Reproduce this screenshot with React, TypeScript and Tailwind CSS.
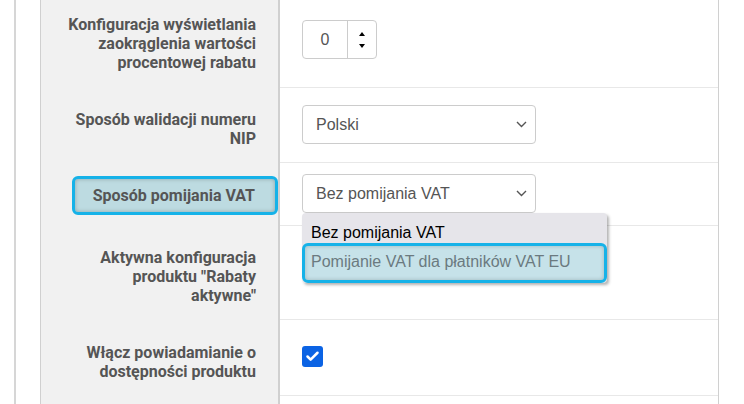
import { Check } from "lucide-react";

const labelFont = "font-['Roboto',sans-serif] font-bold text-[16px] leading-[19px] text-[#555555]";
const inputFont = "font-['Liberation_Sans',Arial,sans-serif] text-[16px]";

const Chevron = () => (
  <svg width="11" height="7" viewBox="0 0 11 7" className="shrink-0">
    <path d="M1 1l4.5 4.5L10 1" fill="none" stroke="#555" strokeWidth="1.4" />
  </svg>
);

const Select = ({ value }: { value: string }) => (
  <div className={`flex h-[39px] w-[234px] items-center justify-between rounded-[4px] border border-[#cccccc] bg-white pl-[13px] pr-[8px] text-[#555555] ${inputFont}`}>
    <span>{value}</span>
    <Chevron />
  </div>
);

const App = () => {
  return (
    <div className="flex h-[404px] w-[744px] overflow-hidden bg-white">
      <div className="ml-[14px] w-[2px] bg-[#d6d6d6]" />
      <div className="-mt-[7px] ml-[24px] w-[679px] border-l border-r border-[#d0d0d0]">
        {/* wiersz 1 */}
        <div className="grid h-[95px] grid-cols-[239px_1fr]">
          <div className={`border-r-2 border-[#d0d0d0] bg-[#f1f1f1] pr-[22px] pt-[22px] text-right ${labelFont}`}>
            Konfiguracja wyświetlania
            <br />
            zaokrąglenia wartości
            <br />
            procentowej rabatu
          </div>
          <div className="border-b border-[#e8e8e8] pl-[22px] pt-[27px]">
            <div className={`flex h-[39px] w-[75px] rounded-[4px] border border-[#cccccc] ${inputFont}`}>
              <div className="flex w-[44px] items-center justify-center text-[#555555]">0</div>
              <div className="flex flex-1 flex-col items-center justify-center gap-[8px] border-l border-[#cccccc]">
                <span className="h-0 w-0 border-x-[3px] border-b-[4px] border-x-transparent border-b-black" />
                <span className="h-0 w-0 border-x-[3px] border-t-[4px] border-x-transparent border-t-black" />
              </div>
            </div>
          </div>
        </div>

        {/* wiersz 2 */}
        <div className="grid h-[75px] grid-cols-[239px_1fr]">
          <div className={`border-r-2 border-[#d0d0d0] bg-[#f1f1f1] pr-[22px] pt-[22px] text-right ${labelFont}`}>
            Sposób walidacji numeru
            <br />
            NIP
          </div>
          <div className="border-b border-[#e8e8e8] pl-[22px] pt-[17px]">
            <Select value="Polski" />
          </div>
        </div>

        {/* wiersz 3 */}
        <div className="grid h-[63px] grid-cols-[239px_1fr]">
          <div className="flex justify-end border-r-2 border-[#d0d0d0] bg-[#f1f1f1] pt-[13px]">
            <div className={`h-[39px] w-[206px] rounded-[6px] border-[3px] border-[#16b2e8] bg-[#bddbe1] py-[7px] pr-[20px] text-right shadow-[inset_0_0_4px_rgba(0,0,0,0.25)] ${labelFont} text-[#47565c]`}>
              Sposób pomijania VAT
            </div>
          </div>
          <div className="relative border-b border-[#e8e8e8] pl-[22px] pt-[11px]">
            <Select value="Bez pomijania VAT" />
            <div className={`absolute left-[22px] top-[50px] z-10 w-[305px] overflow-hidden rounded-[4px] bg-[#e6e5ea] shadow-[2px_2px_3px_rgba(0,0,0,0.3)] ${inputFont}`}>
              <div className="h-[30px] pl-[9px] pt-[10px] leading-[19px] text-black">Bez pomijania VAT</div>
              <div className="h-[40px] rounded-[6px] border-[3px] border-[#16b2e8] bg-[#c6e2e9] pl-[6px] pt-[6px] leading-[19px] text-[#6b7a80] shadow-[inset_0_0_4px_rgba(0,0,0,0.2)]">
                Pomijanie VAT dla płatników VAT EU
              </div>
            </div>
          </div>
        </div>

        {/* wiersz 4 */}
        <div className="grid h-[94px] grid-cols-[239px_1fr]">
          <div className={`border-r-2 border-[#d0d0d0] bg-[#f1f1f1] pr-[22px] pt-[22px] text-right ${labelFont}`}>
            Aktywna konfiguracja
            <br />
            produktu "Rabaty
            <br />
            aktywne"
          </div>
          <div className="border-b border-[#e8e8e8]" />
        </div>

        {/* wiersz 5 */}
        <div className="grid h-[76px] grid-cols-[239px_1fr]">
          <div className={`border-r-2 border-[#d0d0d0] bg-[#f1f1f1] pr-[22px] pt-[23px] text-right ${labelFont}`}>
            Włącz powiadamianie o
            <br />
            dostępności produktu
          </div>
          <div className="border-b border-[#e8e8e8] pl-[22px] pt-[26px]">
            <div className="flex h-[21px] w-[21px] items-center justify-center rounded-[3px] bg-[#0b63e4]">
              <Check size={15} strokeWidth={4} color="white" />
            </div>
          </div>
        </div>

        {/* wiersz 6 */}
        <div className="grid h-[60px] grid-cols-[239px_1fr]">
          <div className="border-r-2 border-[#d0d0d0] bg-[#f1f1f1]" />
          <div />
        </div>
      </div>
    </div>
  );
};

export default App;
